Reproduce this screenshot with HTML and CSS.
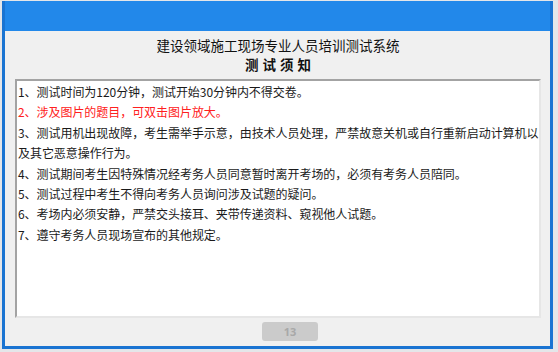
FILE: index.html
```html
<!DOCTYPE html>
<html>
<head>
  <meta charset="utf-8">
  <link rel="stylesheet" href="styles.css">
</head>
<body>
  <div class="window">
    <div class="title-bar"></div>
    <div class="window-body">
      <div class="heading">
        <div class="heading-main">建设领域施工现场专业人员培训测试系统</div>
        <div class="heading-sub">测试须知</div>
      </div>

      <div class="notice-box">
        <p>1、测试时间为120分钟，测试开始30分钟内不得交卷。</p>
        <p class="warn">2、涉及图片的题目，可双击图片放大。</p>
        <p>3、测试用机出现故障，考生需举手示意，由技术人员处理，严禁故意关机或自行重新启动计算机以及其它恶意操作行为。</p>
        <p>4、测试期间考生因特殊情况经考务人员同意暂时离开考场的，必须有考务人员陪同。</p>
        <p>5、测试过程中考生不得向考务人员询问涉及试题的疑问。</p>
        <p>6、考场内必须安静，严禁交头接耳、夹带传递资料、窥视他人试题。</p>
        <p>7、遵守考务人员现场宣布的其他规定。</p>
      </div>

      <div class="footer">
        <button class="countdown-btn" disabled>13</button>
      </div>
    </div>
  </div>
</body>
</html>
```

FILE: styles.css
```css
:root {
  --frame-blue: #1a74d2;
  --title-blue: #2288ea;
  --panel-bg: #f0f0f0;
  --text-main: #1a1a1a;
  --text-warn: #ff2020;
}

* {
  margin: 0;
  padding: 0;
  box-sizing: border-box;
}

body {
  width: 558px;
  height: 352px;
  background: #e4e6e9;
  padding: 1px 5px 3px 2px;
  font-family: "Noto Sans CJK SC", "Noto Sans", sans-serif;
  color: var(--text-main);
  overflow: hidden;
}

.window {
  height: 348px;
  display: flex;
  flex-direction: column;
  border: 3px solid var(--frame-blue);
  border-top: none;
  background: var(--panel-bg);
}

.title-bar {
  height: 30px;
  background: var(--title-blue);
  flex-shrink: 0;
}

.window-body {
  flex: 1;
  display: flex;
  flex-direction: column;
  padding: 0 9px 2px 10px;
}

.heading {
  height: 48px;
  padding-top: 5px;
  text-align: center;
  font-size: 13.5px;
  line-height: 18.5px;
  color: #111;
}

.heading-sub {
  font-weight: bold;
  letter-spacing: 4px;
  padding-left: 4px;
}

.notice-box {
  height: 239px;
  background: #fff;
  border-top: 2px solid #a3a3a3;
  border-left: 2px solid #a3a3a3;
  border-right: 2px solid #e6e6e6;
  border-bottom: 2px solid #e6e6e6;
  padding: 1px 0 0 1px;
  font-size: 12px;
  line-height: 20.4px;
  letter-spacing: -0.05px;
}

.notice-box .warn {
  color: var(--text-warn);
}

.footer {
  flex: 1;
  display: flex;
  justify-content: center;
  align-items: center;
  padding-left: 24px;
}

.countdown-btn {
  width: 56px;
  height: 19px;
  border: none;
  border-radius: 3px;
  background: #cbcbcb;
  color: #a8a8a8;
  font-family: "Noto Sans", sans-serif;
  font-size: 11px;
  font-weight: bold;
}
```
